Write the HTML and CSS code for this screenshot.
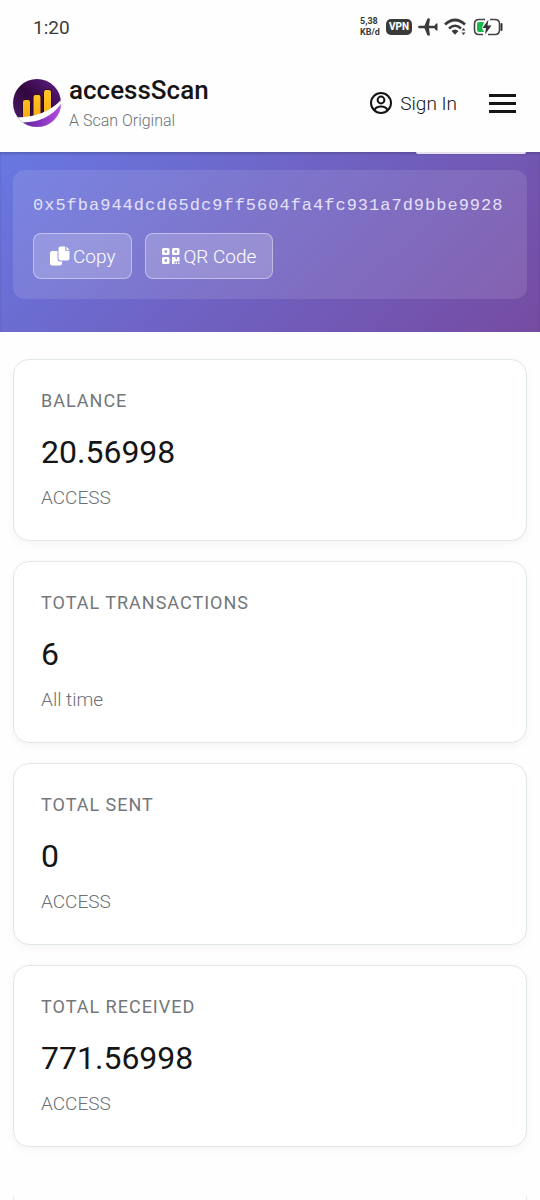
FILE: index.html
```html
<!DOCTYPE html>
<html lang="en">
<head>
<meta charset="utf-8">
<meta name="viewport" content="width=device-width, initial-scale=1">
<title>accessScan</title>
<link rel="stylesheet" href="styles.css">
</head>
<body>
<div class="status">
  <span class="clock">1:20</span>
  <div class="indicators">
    <span class="rate">5,38<br>KB/d</span>
    <span class="vpn">VPN</span>
    <svg width="20" height="20" viewBox="0 0 20 20" fill="#3a3a3a"><path d="M0 10Q0 8.700 2 8.700L6.500 8.700L9.500 1.500H12L11 8.700H16.500L18 6.500H19.500V13.500H18L16.500 11.300H11L12 18.500H9.500L6.500 11.300H2Q0 11.300 0 10Z"/></svg>
    <svg width="23" height="18" viewBox="0 0 23 18" fill="none" stroke="#3a3a3a"><path d="M1 6.500Q11 -2.500 21 6.500" stroke-width="2.800"/><path d="M5 10.500Q11 5 17 10.500" stroke-width="2.600"/><path d="M7.500 13Q11 10 14.500 13L11 16.800Z" fill="#3a3a3a" stroke="none"/><path d="M17.500 12.500L19.500 10L21.500 12.500ZM17.500 14.500H21.500L19.500 17Z" fill="#3a3a3a" stroke="none"/></svg>
    <svg width="31" height="18" viewBox="0 0 31 18"><path d="M12 1.500H6Q1.500 1.500 1.500 6V12Q1.500 16.500 6 16.500H10M17 1.500H22Q26.500 1.500 26.500 6V12Q26.500 16.500 22 16.500H15" fill="none" stroke="#444" stroke-width="1.600"/><path d="M11 4H6Q4 4 4 6V12Q4 14 6 14H11L9 10Z" fill="#18b84a"/><path d="M15.500 1.500L9.500 10H13L12 16.500L18.500 7.500H14.500Z" fill="#333"/><path d="M28.500 6V12" stroke="#333" stroke-width="2" stroke-linecap="round"/></svg>
  </div>
</div>
<header class="header">
  <a class="brand" href="#">
    <svg class="logo" width="48" height="48" viewBox="0 0 48 48">
      <defs>
        <linearGradient id="night" x1="0" y1="1" x2="1" y2="0"><stop offset="0" stop-color="#50206e"/><stop offset=".5" stop-color="#32063f"/><stop offset="1" stop-color="#62218a"/></linearGradient>
        <linearGradient id="violet" x1="0" y1="0" x2="1" y2="0"><stop offset="0" stop-color="#6122a0"/><stop offset="1" stop-color="#b44be0"/></linearGradient>
        <linearGradient id="gold" x1="0" y1="0" x2="0" y2="1"><stop offset="0" stop-color="#ffc928"/><stop offset="1" stop-color="#f9a90d"/></linearGradient>
        <clipPath id="disc"><circle cx="24" cy="24" r="24"/></clipPath>
      </defs>
      <g clip-path="url(#disc)">
        <rect width="48" height="48" fill="url(#night)"/>
        <path d="M9.500 40V23Q9.500 20.500 12 20.500H15Q17.500 20.500 17.500 23V40ZM20 38V18Q20 15.500 22.500 15.500H25.500Q28 15.500 28 18V38ZM30.500 35V13Q30.500 10.500 33 10.500H36Q38.500 10.500 38.500 13V35Z" fill="url(#gold)" stroke="#2a0636" stroke-width="1"/>
        <path d="M4 38.500Q32 38 48 21V48H8Z" fill="#fff"/>
        <path d="M10 43.500Q35 43 48 25V48H12Z" fill="url(#violet)"/>
      </g>
    </svg>
    <span class="brand-text"><span class="brand-name">accessScan</span><span class="tagline">A Scan Original</span></span>
  </a>
  <nav class="actions">
    <a class="signin" href="#">
      <svg width="24" height="24" viewBox="0 0 24 24" fill="none" stroke="#151515" stroke-width="2"><circle cx="12" cy="12" r="10"/><circle cx="12" cy="9" r="3.400"/><path d="M5.500 19Q7 15.500 12 15.500T18.500 19"/></svg>
      Sign In
    </a>
    <button class="menu" type="button" aria-label="Menu"><span></span><span></span><span></span></button>
  </nav>
</header>
<main>
  <section class="hero">
    <div class="hero-tab"></div>
    <div class="address">
      <div class="hash">0x5fba944dcd65dc9ff5604fa4fc931a7d9bbe9928</div>
      <div class="buttons">
        <button class="button" type="button">
          <svg width="20" height="20" viewBox="0 0 20 20" fill="#fff"><path d="M2 5H7.500V13Q7.500 15.500 10 15.500H12V17.500Q12 19.500 10 19.500H2Q0 19.500 0 17.500V7Q0 5 2 5ZM10.500 .5H15.200V3.500Q15.200 4.800 16.500 4.800H19.500V12.500Q19.500 14.500 17.500 14.500H10.500Q8.500 14.500 8.500 12.500V2.500Q8.500 .5 10.500 .5ZM16.400 .5L19.500 3.700H16.400Z"/></svg>
          Copy
        </button>
        <button class="button" type="button">
          <svg width="18" height="18" viewBox="0 0 18 18" fill="#fff" fill-rule="evenodd"><path d="M1.500 1H6Q7.500 1 7.500 2.500V6.500Q7.500 8 6 8H1.500Q0 8 0 6.500V2.500Q0 1 1.500 1ZM2.600 3.300V5.700H4.900V3.300ZM11.500 1H16Q17.500 1 17.500 2.500V6.500Q17.500 8 16 8H11.500Q10 8 10 6.500V2.500Q10 1 11.500 1ZM12.600 3.300V5.700H14.900V3.300ZM1.500 10H6Q7.500 10 7.500 11.500V15.500Q7.500 17 6 17H1.500Q0 17 0 15.500V11.500Q0 10 1.500 10ZM2.600 12.300V14.700H4.900V12.300ZM10 10H13.500V12H15V10H17.500V14.500H12.500V17H10ZM13.500 15.500H15V17H13.500ZM16 15.500H17.500V17H16Z"/></svg>
          QR Code
        </button>
      </div>
    </div>
  </section>
  <section class="cards">
    <article class="card"><h2>BALANCE</h2><p class="value">20.56998</p><p class="unit">ACCESS</p></article>
    <article class="card"><h2>TOTAL TRANSACTIONS</h2><p class="value">6</p><p class="unit">All time</p></article>
    <article class="card"><h2>TOTAL SENT</h2><p class="value">0</p><p class="unit">ACCESS</p></article>
    <article class="card"><h2>TOTAL RECEIVED</h2><p class="value">771.56998</p><p class="unit">ACCESS</p></article>
  </section>
  <section class="panel"></section>
</main>
</body>
</html>
```
FILE: styles.css
```css
* { box-sizing: border-box; }
body {
  margin: 0;
  min-height: 100vh;
  display: flex;
  flex-direction: column;
  background: #fefefe;
  color: #151515;
  font-family: Roboto, sans-serif;
  font-weight: 300;
}
a { color: inherit; text-decoration: none; }
button { font: inherit; color: inherit; cursor: pointer; }
h2, p { margin: 0; }
svg { display: block; flex: none; }

.status {
  height: 54px;
  padding: 0 36px 0 33px;
  display: flex;
  align-items: center;
  justify-content: space-between;
  color: #3a3a3a;
}
.clock { font-size: 19px; font-weight: 400; }
.indicators { display: flex; align-items: center; gap: 6px; }
.rate { font-size: 9px; line-height: 11px; font-weight: 700; }
.vpn {
  padding: 0 3px;
  border-radius: 5px;
  background: #3a3a3a;
  color: #fff;
  font-size: 10px;
  line-height: 16px;
  font-weight: 800;
}

.header {
  height: 98px;
  padding: 0 24px 0 13px;
  display: flex;
  align-items: center;
  justify-content: space-between;
  background: #fefefe;
}
.brand { display: flex; align-items: center; gap: 8px; }
.brand-text { display: flex; flex-direction: column; padding-top: 4px; }
.brand-name { font-size: 26px; line-height: 32px; font-weight: 500; }
.tagline { font-size: 16px; line-height: 30px; color: #6c7175; }
.actions { display: flex; align-items: center; gap: 32px; }
.signin {
  display: flex;
  align-items: center;
  gap: 7px;
  font-size: 19px;
}
.menu {
  width: 27px;
  padding: 0;
  border: 0;
  background: none;
  display: grid;
  gap: 5px;
}
.menu span { height: 3px; background: #151515; }

.hero {
  position: relative;
  padding: 18px 13px 33px;
  background: linear-gradient(135deg, #667eea, #764ba2);
  background-size: 100% calc(100% + 100px);
  background-position: bottom;
  box-shadow: inset 0 2px 2px rgba(40, 40, 80, .25);
}
.hero-tab {
  position: absolute;
  top: 0;
  right: 14px;
  width: 110px;
  height: 2px;
  border-radius: 0 0 6px 6px;
  background: #e6e2f3;
}
.address {
  padding: 20px;
  border-radius: 12px;
  background: rgba(255, 255, 255, .11);
  color: #fff;
}
.hash {
  margin-bottom: 11px;
  font-family: "Liberation Mono", monospace;
  font-size: 17px;
  line-height: 32px;
  letter-spacing: 1px;
  color: #e4e1fa;
  overflow-wrap: anywhere;
}
.buttons { display: flex; flex-wrap: wrap; gap: 13px; }
.button {
  height: 46px;
  padding: 0 16px;
  display: flex;
  align-items: center;
  gap: 3px;
  border: 1px solid rgba(255, 255, 255, .4);
  border-radius: 8px;
  background: rgba(255, 255, 255, .2);
  font-size: 19px;
}

.cards { padding: 27px 13px 0; display: grid; gap: 20px; }
.card {
  padding: 27px;
  border: 1px solid #e0e7e8;
  border-radius: 16px;
  background: #fff;
  box-shadow: 0 3px 10px rgba(0, 0, 0, .04);
}
.card h2 {
  font-size: 18px;
  line-height: 28px;
  font-weight: 400;
  letter-spacing: 1px;
  color: #73777a;
}
.value { margin: 15px 0 11px; font-size: 32px; line-height: 44px; font-weight: 400; }
.unit { padding-bottom: 2px; font-size: 19px; line-height: 26px; color: #6c7175; }

main { flex: 1; display: flex; flex-direction: column; }
.panel {
  flex: 1;
  min-height: 4px;
  margin: 49px 13px 0;
  border: 1px solid #e6eaea;
  border-width: 0 1px;
}
```
